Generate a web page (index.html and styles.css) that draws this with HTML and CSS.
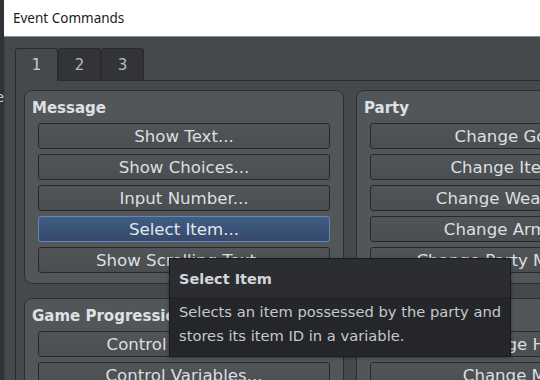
FILE: index.html
```html
<!DOCTYPE html>
<html>
<head>
	<title>Event Commands</title>
	<link rel="stylesheet" href="styles.css">
</head>
<body>
	<div class="screen">
		<div class="backdrop"><span class="peek">Note</span></div>
		<div class="window">
			<div class="titlebar">Event Commands</div>
			<div class="cuerpo">
				<div class="tabs">
					<div class="tab active">1</div>
					<div class="tab">2</div>
					<div class="tab">3</div>
				</div>
				<div class="panel">
					<div class="grid">
						<div class="group">
							<div class="group-title">Message</div>
							<div class="buttons">
								<div class="btn">Show Text...</div>
								<div class="btn">Show Choices...</div>
								<div class="btn">Input Number...</div>
								<div class="btn selected">Select Item...</div>
								<div class="btn">Show Scrolling Text...</div>
							</div>
						</div>
						<div class="group">
							<div class="group-title">Party</div>
							<div class="buttons">
								<div class="btn">Change Gold...</div>
								<div class="btn">Change Items...</div>
								<div class="btn">Change Weapons...</div>
								<div class="btn">Change Armors...</div>
								<div class="btn">Change Party Member...</div>
							</div>
						</div>
						<div class="group">
							<div class="group-title">Game Progression</div>
							<div class="buttons">
								<div class="btn">Control Switches...</div>
								<div class="btn">Control Variables...</div>
								<div class="btn">Control Self Switch...</div>
							</div>
						</div>
						<div class="group">
							<div class="group-title">Actor</div>
							<div class="buttons">
								<div class="btn">Change HP...</div>
								<div class="btn">Change MP...</div>
								<div class="btn">Change TP...</div>
							</div>
						</div>
					</div>
				</div>
			</div>
		</div>

		<div class="tooltip">
			<div class="tip-head">Select Item</div>
			<div class="tip-text">Selects an item possessed by the party and<br>stores its item ID in a variable.</div>
		</div>
	</div>
</body>
</html>
```

FILE: styles.css
```css
body
{
	margin: 0;
	width: 540px;
	height: 380px;
	overflow: hidden;
	background-color: #2e3033;
	font-family: "DejaVu Sans", sans-serif;
}
.screen
{
	position: relative;
	display: flex;
	width: 540px;
	height: 380px;
	overflow: hidden;
}
.backdrop
{
	flex: none;
	width: 4px;
	overflow: hidden;
	background-color: #303235;
	display: flex;
	justify-content: flex-end;
	padding-top: 88px;
	box-sizing: border-box;
}
.peek
{
	color: #c9cdd1;
	font-size: 14px;
	line-height: 18px;
	white-space: nowrap;
}
.window
{
	flex: 1;
	min-width: 0;
	display: flex;
	flex-direction: column;
	background-color: #46494c;
}
.titlebar
{
	flex: none;
	height: 36px;
	background-color: #ffffff;
	border-bottom: 1px solid #8f8f8f;
	display: flex;
	align-items: center;
	padding-left: 9px;
	font-family: "Noto Sans", sans-serif;
	font-size: 13.5px;
	color: #1b1b1b;
}
.cuerpo
{
	flex: 1;
	display: flex;
	flex-direction: column;
	padding: 11px 0 0 10px;
	border-left: 1px solid #3b3e41;
}
.tabs
{
	display: flex;
	height: 32px;
}
.tab
{
	width: 43px;
	box-sizing: border-box;
	border: 1px solid #292b2e;
	border-bottom: none;
	border-radius: 3px 3px 0 0;
	background-color: #323437;
	color: #b6bbc0;
	font-size: 15px;
	display: flex;
	align-items: center;
	justify-content: center;
}
.tab.active
{
	background-color: #46494c;
	color: #c9cdd1;
	height: 33px;
	position: relative;
	z-index: 1;
}
.panel
{
	flex: 1;
	border-top: 1px solid #292b2e;
	border-left: 1px solid #292b2e;
	padding: 9px 0 0 8px;
}
.grid
{
	display: grid;
	grid-template-columns: 320px 320px;
	column-gap: 12px;
	row-gap: 14px;
}
.group
{
	background-color: #535659;
	border: 1px solid #2c2e31;
	border-radius: 8px;
	padding: 6px 13px 10px;
}
.group-title
{
	margin-left: -6px;
	margin-bottom: 4px;
	font-size: 15px;
	font-weight: bold;
	line-height: 22px;
	color: #dde1e5;
	white-space: nowrap;
}
.buttons
{
	display: flex;
	flex-direction: column;
	gap: 5px;
}
.btn
{
	height: 26px;
	box-sizing: border-box;
	border: 1px solid #26282a;
	border-radius: 3px;
	background: linear-gradient(#525558, #4b4e51);
	color: #dcdfe2;
	font-size: 16.6px;
	display: flex;
	align-items: center;
	justify-content: center;
	white-space: nowrap;
}
.btn.selected
{
	border-color: #5b88c2;
	background: linear-gradient(#415d84, #36496a);
	color: #e3e7ec;
}
.tooltip
{
	position: absolute;
	left: 169px;
	top: 258px;
	width: 342px;
	box-sizing: border-box;
	border: 1px solid #1a1b1d;
	background-color: #242629;
	box-shadow: 0 1px 3px rgba(0, 0, 0, 0.4);
}
.tip-head
{
	height: 38px;
	line-height: 40px;
	padding: 0 9px;
	background-color: #2b2d30;
	color: #d2d6da;
	font-size: 14.5px;
	font-weight: bold;
}
.tip-text
{
	padding: 3px 9px 8px;
	line-height: 24px;
	color: #c5c9cd;
	font-size: 14.7px;
	white-space: nowrap;
}
```
